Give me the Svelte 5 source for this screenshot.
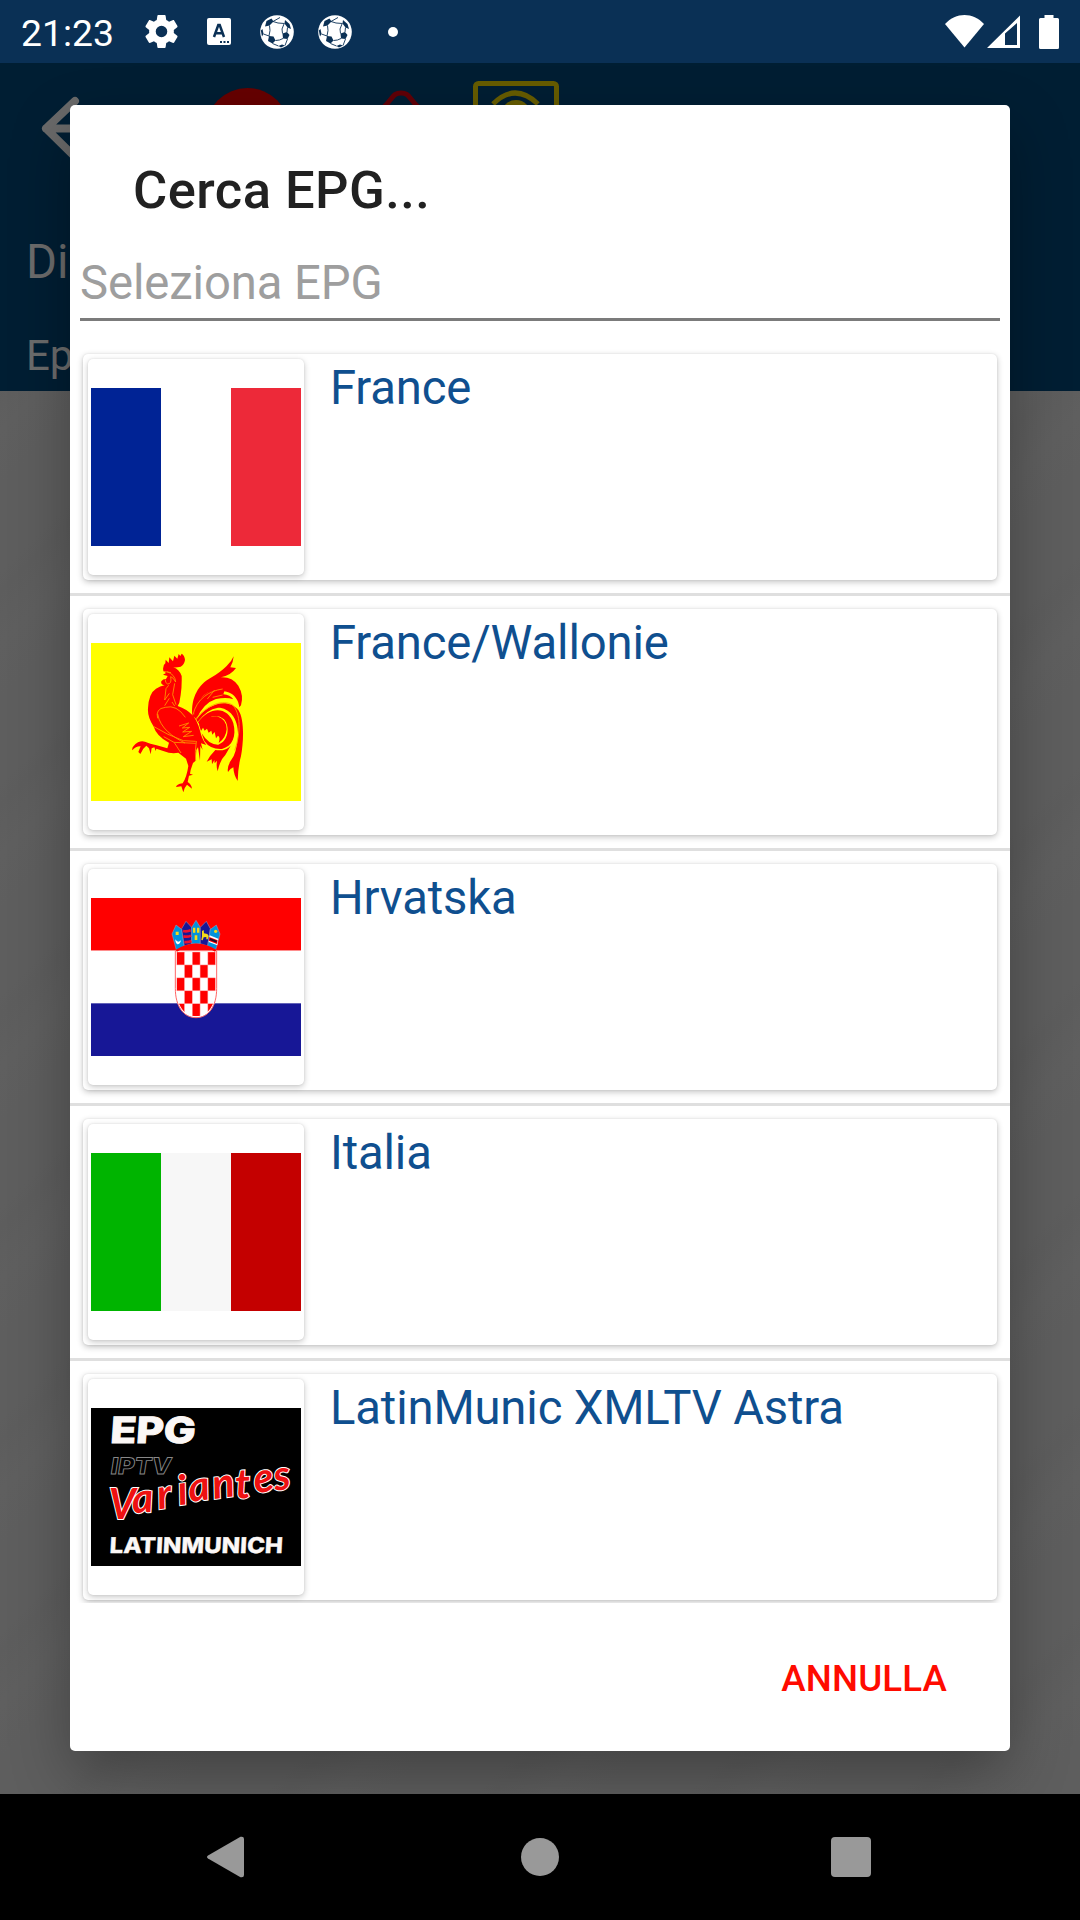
<script lang="ts">
	const entries = [
		{ name: 'France', flag: 'fr' },
		{ name: 'France/Wallonie', flag: 'wallonie' },
		{ name: 'Hrvatska', flag: 'hr' },
		{ name: 'Italia', flag: 'it' },
		{ name: 'LatinMunic XMLTV Astra', flag: 'latin' }
	];

	// red fields of the chequered shield
	const checks: { x: number; y: number }[] = [];
	for (let row = 0; row < 5; row++) {
		for (let col = 0; col < 5; col++) {
			if ((row + col) % 2 === 0) checks.push({ x: 290 + col * 23.4, y: 276 + row * 38.8 });
		}
	}
</script>

{#snippet ball()}
	<svg class="status-icon" viewBox="0 0 34 34" width="34" height="34">
		<circle cx="17" cy="17" r="16.8" fill="#fff" />
		<g fill="#0a3055">
			<path d="M6.500 6L11.500 3.500 13.500 6.500 9.500 10.500 5 11.500z" />
			<path d="M25 5L29.500 9 31 14 27.500 12.500 24.500 8.500z" />
			<path d="M22.500 18.500L27 17 29.500 20 27.500 24 23 23.500z" />
			<path d="M9 21L13.500 21.500 15.500 25.500 12.500 28.500 8 26z" />
			<path d="M.8 15.500L2.500 14 3.500 19 2 21.500z" />
			<path d="M18.500 31L22 29.500 25 30.500 21 32.500z" />
		</g>
		<path
			d="M13 6.500l5 1.500 6.500 .5M9.500 10.500l.5 5-1 5.500M24 9l-2 5 .5 4.500M15.500 25.500l4-.5 3.500-1.500M3.500 19l5.500 2M13 6.500l7-4M12.500 28.500l6 2.500M27.500 12.500L27 17M27.500 24l-2.500 6.500"
			fill="none"
			stroke="#0a3055"
			stroke-width=".9"
		/>
	</svg>
{/snippet}

{#snippet rooster()}
	<rect width="630" height="474" fill="#ff0" />
	<g transform="translate(117 -9)" fill="#f00">
		<!-- head, body and legs -->
		<path
			d="M100 93Q97 76 106 70L107 59L116 69L118 52L129 64L133 47L142 56L146 42L151 48L155 41Q164 46 165 60Q163 74 152 80Q140 83 130 82Q148 88 155 108Q156 140 152 165L148 188L143 198Q170 207 188 226Q203 245 210 272Q216 298 229 315L213 310L218 330L211 318L210 362L204 322L199 330L197 362L189 369L182 390L180 401L189 404L177 407L173 426Q184 432 186 446L171 434Q163 442 160 457L154 439L138 441Q139 433 158 430Q170 412 175 378L168 356L145 338L131 340L116 338L79 326L77 333L73 322L65 325L62 343L57 325L49 317L40 326L31 342L25 336L32 319Q18 318 7 331Q4 320 24 307Q35 301 45 305Q60 311 80 316L112 325L117 308Q80 290 70 258Q52 230 54 205Q56 160 78 146Q90 138 104 136Q91 134 94 124Q98 117 108 117L113 108L99 104L108 99z"
		/>
		<!-- tail plumes -->
		<path
			d="M187 226C182 172 208 132 240 115Q270 98 290 78Q305 64 311 49Q310 65 301 82L318 84Q304 105 273 112Q306 110 325 137Q342 166 333 196L328 202Q325 183 319 176C300 147 260 150 232 158Q205 172 191 233z"
		/>
		<path d="M191 230C198 190 215 165 240 154L285 148L280 163Q300 164 310 178Q290 170 258 177Q220 189 199 238z" />
		<path
			d="M199 239C230 195 290 170 325 210C345 240 340 310 333 348Q324 380 323 423Q311 405 310 382Q301 385 294 396Q290 380 305 358Q319 340 324 290C327 238 300 203 264 203Q230 208 203 246z"
		/>
		<path
			d="M204 247C240 196 295 200 310 250C320 290 307 319 276 327Q241 329 223 303L215 280Q236 315 265 314C295 304 301 260 282 238Q251 211 209 255z"
		/>
		<path
			d="M207 254Q228 226 261 229Q290 238 290 268Q288 294 266 309Q272 291 264 287L258 295L254 276L247 284L244 272L236 278L231 266L224 272L219 263L213 273z"
		/>
		<path d="M256 330Q285 335 302 317L286 345Q270 360 263 394Q258 380 261 362L254 370L253 360L246 373L245 358L230 365Q240 346 256 330z" />
		<g fill="none" stroke="#ff9c00" stroke-width="2.500">
			<path d="M111 95Q135 103 137 126Q129 111 122 110Q126 132 113 132Q105 129 106 119M101 94l22 4M116 136l-8 10-4 34 14-20M134 130l-6 34 10 30M118 175l-14 22M126 186l8 12" />
			<path d="M83 235Q75 206 106 202Q140 193 166 232M83 222C90 265 130 292 165 309M70 259Q112 285 160 302L197 304" />
			<path d="M147 258l29-9-19 15 22-2-21 14 27-2-25 16 31-4M101 290l31 17 65 3M133 308l20 31M199 303q-5 35-2 59" />
			<path d="M189 224C200 177 238 152 278 147M254 150l-22 27M278 165l-30 7M197 237C232 194 280 176 309 196C338 230 327 296 314 331" />
		</g>
	</g>
{/snippet}

{#snippet croatia()}
	<rect width="630" height="158" fill="#f00" />
	<rect y="158" width="630" height="158" fill="#fff" />
	<rect y="316" width="630" height="158" fill="#171796" />
	<g transform="translate(-33 -114)">
		<path
			d="M286 272H410V385C410 440 385 473 348 473S286 440 286 385z"
			fill="#fff"
			stroke="#f66"
			stroke-width="3"
		/>
		<clipPath id="shield">
			<path d="M289 275H407V385C407 437 383 469 348 469S289 437 289 385z" />
		</clipPath>
		<g clip-path="url(#shield)">
			{#each checks as c}
				<rect x={c.x} y={c.y} width="23.400" height="38.800" fill="#f00" stroke="#faa" stroke-width="1.500" />
			{/each}
		</g>
		<g stroke="#a9a0b8" stroke-width="1.500">
			<path d="M289 270L276 222L288 195L305 208L313 258z" fill="#0093dd" />
			<path d="M313 258L305 206L318 184L335 202V251z" fill="#171796" />
			<path d="M335 251V202L348 181L361 202V251z" fill="#0093dd" />
			<path d="M361 251V202L379 184L391 206L383 258z" fill="#171796" />
			<path d="M407 270L420 222L409 195L391 208L383 258z" fill="#0093dd" />
		</g>
		<path d="M289 272q59-36 118 0" fill="none" stroke="#f00" stroke-width="7" />
		<path d="M309 213q12 3 23-2M310 229q13 3 23-2M313 246q12 2 21-3" stroke="#f01030" stroke-width="8" fill="none" />
		<g fill="#f7db17">
			<path d="M287 215h9v10h-9zM339 203h7v15h-7zM351 203h7v15h-7zM344 226h8v14h-8z" />
			<path d="M366 213l5-3 1 10 10 2 4 6-3 10h-4v-7l-8 1-3 9-4-1 2-11z" />
			<circle cx="407" cy="214" r="5" />
		</g>
		<path d="M286 238q7 13 17 3-3 13-11 12-6-3-6-15z" fill="#fff" />
		<path d="M389 226l26 10-3 20-26-10z" fill="#fff" />
		<path d="M388 231l25 10-2 11-25-10z" fill="#f00" />
		<path d="M390 234l21 8-2 6-20-8z" fill="#210b2c" />
	</g>
{/snippet}

{#snippet latin()}
	<rect width="630" height="474" fill="#000" />
	<g transform="translate(-33 -114)">
		<text class="logo heavy" transform="translate(89 220) skewX(-4)" font-size="108" textLength="256" lengthAdjust="spacingAndGlyphs">EPG</text>
		<text class="logo outline" transform="translate(89 311) skewX(-9)" font-size="68" textLength="182" lengthAdjust="spacingAndGlyphs">IPTV</text>
		<text
			class="logo script"
			x="86 158 236 298 330 402 468 526 586"
			y="447 430 418 406 396 387 386 370 362"
			rotate="0 -4 -8 -8 -8 -8 -4 -8 -8">Variantes</text
		>
		<text class="logo heavy small" transform="translate(88 549) skewX(-3)" font-size="65" textLength="520" lengthAdjust="spacingAndGlyphs">LATINMUNICH</text>
	</g>
{/snippet}

<div class="screen">
	<header class="status-bar">
		<span class="time">21:23</span>
		<div class="notifications">
			<svg class="status-icon" viewBox="2 2 20 20" width="33" height="33">
				<path
					fill="#fff"
					d="M19.430 12.980c.04-.32.07-.64.07-.98s-.03-.66-.07-.98l2.110-1.650c.19-.15.24-.42.12-.64l-2-3.460c-.12-.22-.39-.3-.61-.22l-2.490 1c-.52-.4-1.080-.73-1.690-.98l-.38-2.650C14.460 2.180 14.250 2 14 2h-4c-.25 0-.46.18-.49.42l-.38 2.650c-.61.25-1.170.59-1.690.98l-2.490-1c-.23-.09-.49 0-.61.22l-2 3.460c-.13.22-.07.49.12.64l2.110 1.650c-.04.32-.07.65-.07.98s.03.66.07.98l-2.110 1.650c-.19.15-.24.42-.12.64l2 3.460c.12.22.39.3.61.22l2.490-1c.52.4 1.080.73 1.690.98l.38 2.650c.03.24.24.42.49.42h4c.25 0 .46-.18.49-.42l.38-2.650c.61-.25 1.170-.59 1.690-.98l2.490 1c.23.09.49 0 .61-.22l2-3.460c.12-.22.07-.49-.12-.64zM12 15.500a3.500 3.500 0 110-7 3.500 3.500 0 010 7z"
				/>
			</svg>
			<svg class="status-icon" viewBox="0 0 24 27" width="24" height="27">
				<rect width="24" height="27" rx="2" fill="#fff" />
				<path d="M7 19l4.300-12h1.400L17 19M8.700 15.200h6.600" fill="none" stroke="#0a3055" stroke-width="2.500" />
				<path d="M13 23h2v2h-2zM16.500 23h2v2h-2zM20 23h2v2h-2z" fill="#0a3055" />
			</svg>
			{@render ball()}
			{@render ball()}
			<svg class="status-icon" viewBox="0 0 10 10" width="10" height="10">
				<circle cx="5" cy="5" r="5" fill="#fff" />
			</svg>
		</div>
		<svg class="signals" viewBox="0 0 114 34" width="114" height="34">
			<g fill="#fff">
				<path d="M0 9C11-3 28-3 39 9L19.500 32.500z" />
				<path d="M42 33L75 .5V33zM60 18.500V30H72V8z" fill-rule="evenodd" />
				<path d="M99.500 0h9v3h4a1.500 1.500 0 011.500 1.500v28a1.500 1.500 0 01-1.500 1.500h-17a1.500 1.500 0 01-1.500-1.500v-28A1.500 1.500 0 0195.500 3h4z" />
			</g>
		</svg>
	</header>

	<main class="page">
		<div class="toolbar">
			<svg class="toolbar-icons" viewBox="0 0 1080 130" width="1080" height="130">
				<path d="M75 38L46 65.500 75 94M46 65.500h54" fill="none" stroke="#6a6a6a" stroke-width="8" stroke-linejoin="round" stroke-linecap="round" />
				<circle cx="247.500" cy="67" r="42" fill="#600" />
				<path d="M384 44C394 34 393 30 401 30s7 4 17 14" fill="none" stroke="#600007" stroke-width="5" />
				<g fill="none" stroke="#665c00" stroke-width="5">
					<rect x="475.500" y="20.500" width="81" height="81" rx="3" />
					<path d="M493 41q22-22 45 0" />
				</g>
				<circle cx="516" cy="52" r="15" fill="#665c00" />
			</svg>
			<span class="label">Di</span>
			<span class="label small">Ep</span>
		</div>

		<div class="dialog">
			<h1>Cerca EPG...</h1>
			<input class="search" type="text" placeholder="Seleziona EPG" />
			<ul class="list">
				{#each entries as entry}
					<li>
						<div class="card">
							<div class="thumb">
								{#if entry.flag === 'fr'}
									<div class="flag stripes fr"><i></i><i></i><i></i></div>
								{:else if entry.flag === 'it'}
									<div class="flag stripes it"><i></i><i></i><i></i></div>
								{:else}
									<svg class="flag" viewBox="0 0 630 474">
										{#if entry.flag === 'wallonie'}
											{@render rooster()}
										{:else if entry.flag === 'hr'}
											{@render croatia()}
										{:else}
											{@render latin()}
										{/if}
									</svg>
								{/if}
							</div>
							<span class="name">{entry.name}</span>
						</div>
					</li>
				{/each}
			</ul>
			<div class="actions">
				<button>ANNULLA</button>
			</div>
		</div>
	</main>

	<nav class="nav-bar">
		<svg viewBox="0 0 38 42" width="38" height="42">
			<path d="M1 19.500L33.500.8Q37 0 37 3v36q0 3-3.500 2.200L1 22.500q-2-1.500 0-3z" fill="#999" />
		</svg>
		<svg viewBox="0 0 38 38" width="38" height="38"><circle cx="19" cy="19" r="19" fill="#999" /></svg>
		<svg viewBox="0 0 40 40" width="40" height="40"><rect width="40" height="40" rx="4" fill="#999" /></svg>
	</nav>
</div>

<style>
	:global(body) {
		margin: 0;
		background: #000;
	}
	.screen {
		display: grid;
		grid-template-rows: 63px 1731px 126px;
		width: 1080px;
		height: 1920px;
		overflow: hidden;
		font-family: Roboto, sans-serif;
	}

	.status-bar {
		display: flex;
		align-items: center;
		background: #0a3055;
		color: #fff;
	}
	.time {
		width: 111px;
		padding: 2px 0 0 21px;
		font-size: 37.3px;
	}
	.notifications {
		display: grid;
		grid-template-columns: repeat(5, 58px);
		justify-items: center;
		align-items: center;
	}
	.status-icon {
		display: block;
	}
	.signals {
		margin-left: auto;
		margin-right: 21px;
	}

	.page {
		position: relative;
		overflow: hidden;
		background: repeating-linear-gradient(135deg, #5e5e5e 0 60px, #5d5d5d 74px, #5f5f5f 110px, #5e5e5e 150px);
	}
	.toolbar {
		display: flex;
		flex-direction: column;
		height: 328px;
		background: #001e33;
		color: #6c6c6c;
	}
	.toolbar-icons {
		display: block;
	}
	.label {
		padding-left: 26px;
		margin-top: 41px;
		font-size: 47.25px;
		line-height: 56px;
	}
	.label.small {
		margin-top: 41px;
		font-size: 42px;
		line-height: 50px;
	}

	.dialog {
		position: absolute;
		top: 42px;
		left: 70px;
		display: flex;
		flex-direction: column;
		width: 940px;
		height: 1646px;
		border-radius: 5px;
		background: #fff;
		box-shadow: 0 24px 60px rgba(0, 0, 0, 0.3);
	}
	h1 {
		margin: 0;
		padding: 54px 63px 0;
		font-size: 52.5px;
		font-weight: 500;
		line-height: 62px;
		letter-spacing: 0.45px;
		color: #212121;
	}
	.search {
		margin: 34px 10px 20px;
		padding: 0 0 7px;
		border: 0;
		border-bottom: 3px solid #7b7b7b;
		outline: 0;
		background: none;
		font: 47.25px/56px Roboto, sans-serif;
		letter-spacing: -0.1px;
		height: 56px;
	}
	.search::placeholder {
		color: #9e9e9e;
		opacity: 1;
	}

	.list {
		height: 1262px;
		margin: 0;
		padding: 0;
		overflow: hidden;
		list-style: none;
	}
	li {
		padding: 13px;
		border-bottom: 3px solid #dfdfdf;
	}
	.card {
		display: flex;
		gap: 26px;
		height: 216px;
		padding: 5px;
		border-radius: 5px;
		box-shadow: 0 2px 6px rgba(0, 0, 0, 0.24), 0 0 2px rgba(0, 0, 0, 0.1);
	}
	.thumb {
		display: flex;
		align-items: center;
		justify-content: center;
		width: 216px;
		border-radius: 5px;
		box-shadow: 0 2px 6px rgba(0, 0, 0, 0.22), 0 0 2px rgba(0, 0, 0, 0.1);
	}
	.flag {
		width: 210px;
		height: 158px;
	}
	.stripes {
		display: grid;
		grid-template-columns: repeat(3, 1fr);
	}
	.fr i:first-child {
		background: #002395;
	}
	.fr i:last-child {
		background: #ed2939;
	}
	.it i {
		background: #f7f7f7;
	}
	.it i:first-child {
		background: #00b400;
	}
	.it i:last-child {
		background: #c40000;
	}
	.name {
		padding-top: 1px;
		font-size: 47.25px;
		line-height: 56px;
		letter-spacing: -0.16px;
		color: #0f4f8f;
	}

	.logo {
		font-family: Inter, sans-serif;
		font-weight: 800;
	}
	.heavy {
		fill: #fbf7f6;
		stroke: #fbf7f6;
		stroke-width: 3;
	}
	.heavy.small {
		stroke-width: 1;
	}
	.outline {
		fill: #000;
		stroke: #888;
		stroke-width: 2.5;
	}
	.script {
		font-family: Lato, sans-serif;
		font-size: 124px;
		font-weight: 700;
		font-style: italic;
		fill: #e11;
		stroke: #fff;
		stroke-width: 6;
		paint-order: stroke;
	}

	.actions {
		display: flex;
		flex: 1;
		align-items: center;
		justify-content: flex-end;
		padding: 3px 63px 0 0;
	}
	button {
		padding: 0;
		border: 0;
		background: none;
		font: 500 36.75px Roboto, sans-serif;
		letter-spacing: 0.1px;
		color: #ff0b00;
	}

	.nav-bar {
		display: flex;
		align-items: center;
		gap: 276px;
		padding: 0 0 0 207px;
		background: #000;
	}
	.nav-bar svg:last-child {
		margin-left: -4px;
	}
</style>
